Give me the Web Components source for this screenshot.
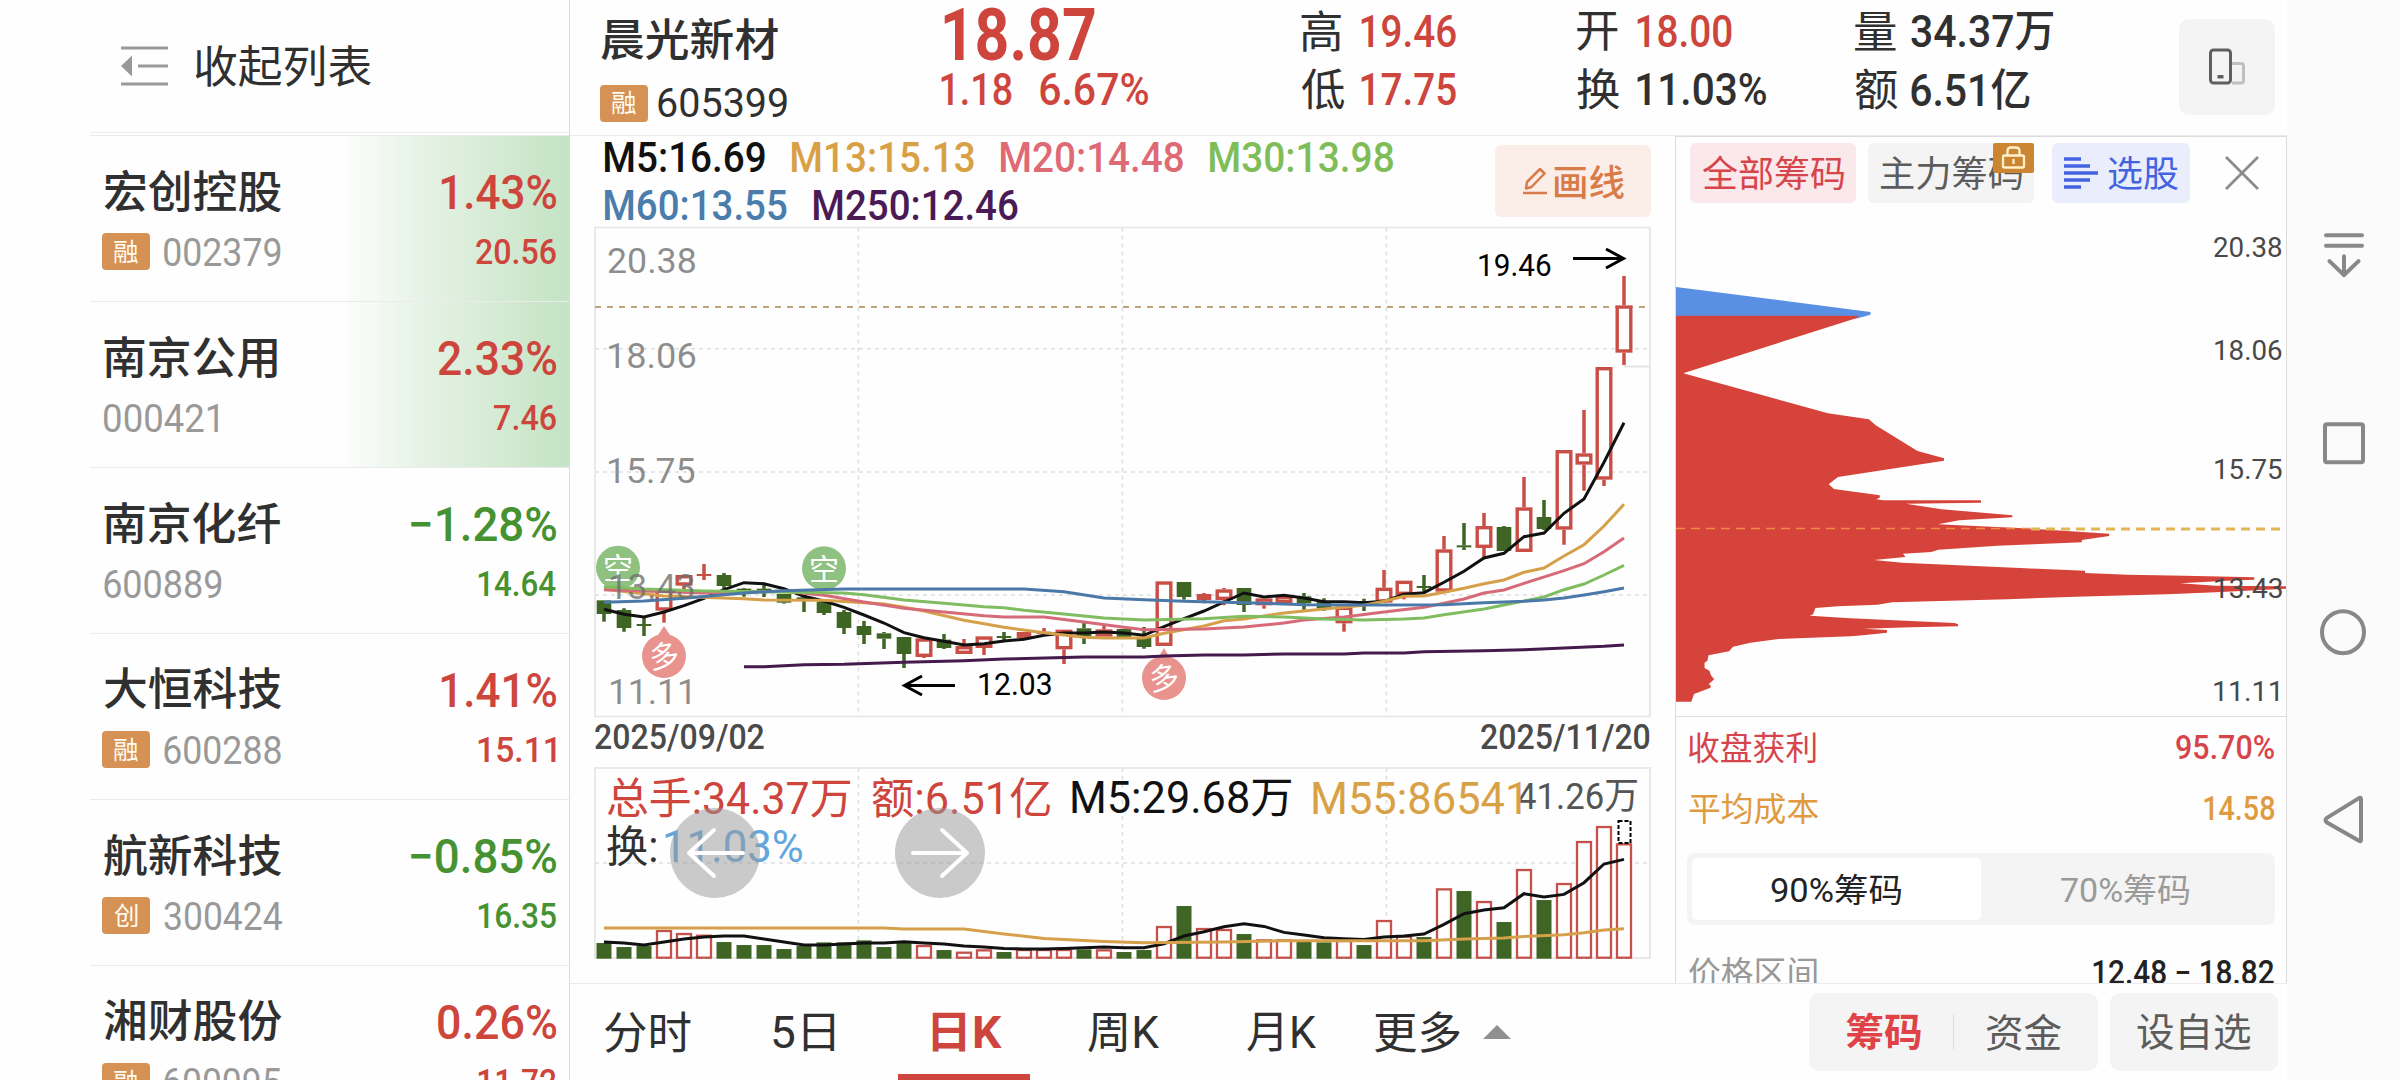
<!DOCTYPE html>
<html lang="zh-CN">
<head>
<meta charset="utf-8">
<title>晨光新材 605399</title>
<style>
    :root {
        --red: #cd453c;
        --green: #469231;
        --ink: #303030;
        --line: #ebebeb;
        --line-dark: #dcdcdc;
        --soft: #f4f4f4;
    }
    body {
        margin: 0;
        width: 2400px;
        height: 1080px;
        overflow: hidden;
        background: #fefefe;
        color: var(--ink);
        font-family: Roboto, "Noto Sans CJK SC", sans-serif;
    }
</style>
</head>
<body>
<app-shell>
    <stock-list slot="list"></stock-list>
    <quote-header slot="header"></quote-header>
    <chart-area slot="charts"></chart-area>
    <chip-panel slot="chips"></chip-panel>
    <period-bar slot="footer"></period-bar>
    <nav-bar slot="nav"></nav-bar>
</app-shell>

<script>
// Page frame: list on the left, quote in the middle, system keys on the right
class AppShell extends HTMLElement {
    constructor() {
        super();
        this.attachShadow({ mode: "open" });
        this.shadowRoot.innerHTML = `
            <style>
                :host {
                    display: grid;
                    grid-template-columns: 480px 1717px 113px;
                    width: 2310px;
                    height: 1080px;
                    padding-left: 90px;
                }
                main {
                    display: grid;
                    grid-template-rows: 136px 847px 97px;
                    height: 1080px;
                }
                .body {
                    display: grid;
                    grid-template-columns: 1105px 612px;
                    min-height: 0;
                }
            </style>
            <slot name="list"></slot>
            <main>
                <slot name="header"></slot>
                <div class="body">
                    <slot name="charts"></slot>
                    <slot name="chips"></slot>
                </div>
                <slot name="footer"></slot>
            </main>
            <slot name="nav"></slot>
        `;
    }
}

// Small orange tag in front of a code
class MarkBadge extends HTMLElement {
    constructor() {
        super();
        this.attachShadow({ mode: "open" });
        this.shadowRoot.innerHTML = `
            <style>
                :host {
                    display: flex;
                    align-items: center;
                    justify-content: center;
                    flex: none;
                    width: 48px;
                    height: 37px;
                    border-radius: 4px;
                    background: #d69255;
                    color: #fffaf0;
                    font-size: 25.5px;
                }
            </style>
            <fit-text><slot></slot></fit-text>
        `;
    }
}

class StockRow extends HTMLElement {
    connectedCallback() {
        const d = this.dataset;
        this.attachShadow({ mode: "open" });
        this.shadowRoot.innerHTML = `
            <style>
                :host {
                    display: block;
                    box-sizing: border-box;
                    height: 166px;
                    padding: 33px 13px 0 14px;
                    border-bottom: 1px solid var(--line);
                }
                :host([flash]) {
                    background: linear-gradient(90deg, rgba(197, 228, 197, 0) 248px, #e3f1e2 345px, #c4e3c4 478px);
                }
                .line {
                    display: flex;
                    align-items: center;
                    height: 44px;
                }
                .line + .line {
                    height: 38px;
                    margin-top: 20px;
                }
                .name { font-size: 44.8px; font-weight: 500; }
                .code { font-size: 38.5px; color: #999; }
                .rate, .price { margin-left: auto; font-weight: 500; color: var(--tone); }
                .rate { font-size: 47.5px; margin-top: 3px; }
                .price { font-size: 35.5px; }
                mark-badge { margin: -1px 14px 0 -2px; }
            </style>
            <div class="line" style="--tone: var(--${d.tone})">
                <fit-text class="name">${d.name}</fit-text>
                <fit-text class="rate" w="${d.rw}">${d.rate}</fit-text>
            </div>
            <div class="line" style="--tone: var(--${d.tone})">
                ${d.mark ? `<mark-badge>${d.mark}</mark-badge>` : ""}
                <fit-text class="code" w="${d.cw}">${d.code}</fit-text>
                <fit-text class="price" w="${d.pw}">${d.price}</fit-text>
            </div>
        `;
    }
}

class StockList extends HTMLElement {
    constructor() {
        super();
        this.attachShadow({ mode: "open" });
        this.shadowRoot.innerHTML = `
            <style>
                :host {
                    display: block;
                    box-sizing: border-box;
                    height: 1080px;
                    overflow: hidden;
                    border-right: 1px solid var(--line-dark);
                }
                .head {
                    display: flex;
                    align-items: center;
                    gap: 26px;
                    height: 132px;
                    padding-left: 31px;
                    border-bottom: 1px solid var(--line);
                    margin-bottom: 2px;
                    font-size: 44.8px;
                }
                .rows { border-top: 1px solid var(--line); }
            </style>
            <div class="head">
                <svg width="48" height="40" viewBox="0 0 48 40">
                    <path d="M0 2H47M17 20H47M0 38H47" stroke="#999" stroke-width="3"/>
                    <path d="M0 20L11 9.500V30.500Z" fill="#999"/>
                </svg>
                <fit-text>收起列表</fit-text>
            </div>
            <div class="rows">
                <stock-row flash data-name="宏创控股" data-mark="融" data-code="002379" data-cw="117" data-rate="1.43%" data-rw="115" data-price="20.56" data-pw="80" data-tone="red"></stock-row>
                <stock-row flash data-name="南京公用" data-code="000421" data-cw="114" data-rate="2.33%" data-rw="118" data-price="7.46" data-pw="62" data-tone="red"></stock-row>
                <stock-row data-name="南京化纤" data-code="600889" data-cw="118" data-rate="−1.28%" data-rw="145" data-price="14.64" data-pw="78" data-tone="green"></stock-row>
                <stock-row data-name="大恒科技" data-mark="融" data-code="600288" data-cw="117" data-rate="1.41%" data-rw="115" data-price="15.11" data-pw="78" data-tone="red"></stock-row>
                <stock-row data-name="航新科技" data-mark="创" data-code="300424" data-cw="118" data-rate="−0.85%" data-rw="145" data-price="16.35" data-pw="78" data-tone="green"></stock-row>
                <stock-row data-name="湘财股份" data-mark="融" data-code="600095" data-cw="117" data-rate="0.26%" data-rw="118" data-price="11.72" data-pw="78" data-tone="red"></stock-row>
            </div>
        `;
    }
}

// Label with its value, for example 高 19.46
class StatItem extends HTMLElement {
    constructor() {
        super();
        this.attachShadow({ mode: "open" });
        this.shadowRoot.innerHTML = `
            <style>
                :host {
                    display: flex;
                    align-items: center;
                    height: 55px;
                    font-size: 44.5px;
                }
                .label { width: var(--label, 60px); }
                .value { font-weight: 500; }
                :host([up]) .value { color: var(--red); }
            </style>
            <div class="label"><fit-text>${this.getAttribute("label")}</fit-text></div>
            <fit-text class="value" w="${this.getAttribute("w")}"><slot></slot></fit-text>
        `;
    }
}

class QuoteHeader extends HTMLElement {
    constructor() {
        super();
        this.attachShadow({ mode: "open" });
        this.shadowRoot.innerHTML = `
            <style>
                :host {
                    display: grid;
                    grid-template-columns: 341px 359px 276px 278px 324px 98px;
                    box-sizing: border-box;
                    height: 136px;
                    padding-left: 31px;
                    border-bottom: 1px solid var(--line);
                }
                .line { display: flex; align-items: center; }
                .name { height: 78px; font-size: 44.8px; font-weight: 500; }
                .code { height: 50px; gap: 10px; font-size: 41.5px; margin-left: -1px; }
                .last { height: 68px; padding-left: 2px; font-size: 71.5px; font-weight: 700; }
                .diff { height: 43px; gap: 28px; font-size: 44.5px; font-weight: 500; margin-left: -1px; }
                .price { color: var(--red); }
                stat-item:first-child { height: 62px; }
                .wide { --label: 56px; }
                .device {
                    display: flex;
                    align-items: center;
                    justify-content: center;
                    width: 96px;
                    height: 96px;
                    margin-top: 19px;
                    border-radius: 10px;
                    background: var(--soft);
                }
            </style>
            <div>
                <div class="line name"><fit-text>晨光新材</fit-text></div>
                <div class="line code">
                    <mark-badge>融</mark-badge>
                    <fit-text w="129">605399</fit-text>
                </div>
            </div>
            <div class="price">
                <div class="line last"><fit-text w="151">18.87</fit-text></div>
                <div class="line diff">
                    <fit-text w="71">1.18</fit-text>
                    <fit-text w="108">6.67%</fit-text>
                </div>
            </div>
            <div>
                <stat-item label="高" w="95" up>19.46</stat-item>
                <stat-item label="低" w="95" up>17.75</stat-item>
            </div>
            <div>
                <stat-item label="开" w="95" up>18.00</stat-item>
                <stat-item label="换" w="129">11.03%</stat-item>
            </div>
            <div class="wide">
                <stat-item label="量" w="142">34.37万</stat-item>
                <stat-item label="额" w="119">6.51亿</stat-item>
            </div>
            <div class="device">
                <svg width="36" height="38" viewBox="0 0 36 38" fill="none">
                    <path d="M23 15.500H32.500Q34.500 15.500 34.500 18V32.500Q34.500 35 32.500 35H23" stroke="#c0c0c0" stroke-width="3"/>
                    <rect x="1.500" y="2" width="20" height="33" rx="3" stroke="#5f5f5f" stroke-width="3"/>
                    <rect x="8.500" y="27" width="6" height="3.500" fill="#5f5f5f"/>
                </svg>
            </div>
        `;
    }
}

// 52 sessions, one every 20px. Levels are thirds of a pixel, measured from y = 520.
const X0 = 604;
const STEP = 20;
// [kind, body top, body bottom, wick top, wick bottom]; g filled, r hollow, f filled red
const CANDLES = [
    ["g",241,282,241,305],["g",270,324,265,335],["g",312,318,288,348],["r",208,272,208,308],
    ["r",165,197,165,208],["f",162,168,132,180],["g",165,198,159,210],["g",206,214,204,230],
    ["g",206,212,195,231],["g",222,248,222,251],["g",232,243,230,276],["g",245,279,245,285],
    ["g",276,324,270,342],["g",318,345,303,372],["g",340,356,336,387],["g",351,402,351,444],
    ["r",355,411,355,414],["g",359,384,342,387],["r",378,402,357,402],["r",349,384,349,405],
    ["g",348,354,336,360],["f",336,354,336,354],["f",335,342,324,348],["r",329,388,329,432],
    ["g",325,349,309,372],["r",328,350,318,350],["g",327,352,327,352],["g",350,381,321,386],
    ["r",184,378,184,378],["g",186,231,186,239],["f",222,240,219,250],["r",208,240,204,256],
    ["g",204,255,204,276],["r",235,256,235,266],["r",228,250,224,250],["g",229,250,219,269],
    ["g",246,265,235,272],["r",260,310,260,335],["g",243,249,236,273],["r",203,248,150,248],
    ["r",182,225,182,238],["g",198,204,165,215],["r",88,215,48,215],["g",76,82,9,90],
    ["r",18,84,-21,115],["g",21,93,18,93],["r",-38,96,-129,96],["g",-9,27,-60,30],
    ["r",-210,29,-208,74],["r",-200,-166,-330,-88],["r",-459,-121,-457,-102],["r",-644,-502,-732,-465]
];
// [session, level] pairs
const AVERAGES = [
    ["#451a4d", [7,440,8,440,10,434,12,433,15,427,18,422,20,417,24,411,27,411,28,408,30,405,32,405,34,402,37,402,38,399,40,399,41,395,44,392,46,389,48,384,50,379,51,375]],
    ["#111", [0,268,1,283,2,291,3,276,4,257,5,235,6,209,7,188,8,191,9,206,10,229,11,243,12,262,13,285,14,309,15,338,16,353,17,364,18,375,19,371,20,363,21,358,22,346,23,339,24,339,25,336,26,339,27,346,28,320,29,296,30,273,31,246,32,219,33,231,34,226,35,234,36,245,37,245,38,248,39,244,40,223,41,218,42,187,43,154,44,114,45,100,46,50,47,39,48,-20,49,-63,50,-173,51,-292]],
    ["#d6a04a", [0,208,3,228,7,236,8,240,11,241,14,252,15,262,16,273,18,301,20,322,22,338,24,352,25,354,27,354,28,340,30,318,31,302,32,297,34,279,36,267,38,256,39,244,40,229,41,228,42,217,43,205,44,191,45,180,46,157,47,144,48,108,49,74,50,18,51,-47]],
    ["#d76a78", [0,209,2,213,5,219,9,214,11,226,13,246,15,265,17,276,19,287,20,291,22,291,24,306,26,322,27,329,30,327,32,321,34,309,35,300,37,291,39,276,41,262,42,250,43,237,44,219,45,210,46,190,48,152,49,131,50,95,51,54]],
    ["#80bd60", [0,200,2,207,5,213,12,219,13,224,15,240,17,250,19,260,20,263,21,271,23,282,25,294,27,300,30,296,32,289,34,291,36,297,38,300,40,297,41,294,42,284,44,267,46,243,47,231,48,209,49,192,50,165,51,136]],
    ["#4a78a8", [0,247,2,243,4,235,7,219,9,212,12,207,21,207,23,215,25,234,27,239,29,244,31,247,33,250,35,254,39,255,42,254,44,248,46,244,47,240,48,234,49,225,50,215,51,204]]
];
// Volume bar heights and their averages, thirds of a pixel above the base line
const VOLUMES = "g47 g35 g38 r86 r77 r72 g50 g41 g41 g29 g38 g49 g49 g55 g35 g48 r41 g26 r21 r28 g20 r29 r29 r29 g28 r28 g20 g26 r98 g158 r92 r89 g74 r58 r58 g53 g49 r56 g41 r116 r69 g65 r211 g203 r173 g110 r269 g176 r227 r353 r398 r346".split(" ");
const VOLUME_AVERAGES = [
    ["#111", [0,50,1,47,2,41,3,50,4,59,5,65,6,68,7,68,8,59,9,50,10,41,11,41,12,44,13,47,14,47,15,51,16,47,17,44,18,38,19,35,20,31,21,29,22,29,23,31,24,33,25,35,26,33,27,33,28,45,29,68,30,81,31,96,32,105,33,97,34,79,35,71,36,63,37,60,38,58,39,65,40,68,41,74,42,103,43,135,44,146,45,153,46,195,47,185,48,193,49,228,50,284,51,298]],
    ["#d6a04a", [0,92,14,92,15,89,18,89,20,74,22,61,25,52,27,48,31,50,34,54,41,54,43,59,45,62,46,67,48,72,49,78,50,86,51,90]]
];

const sessionX = (i) => X0 + i * STEP;

function toLine(color, pairs, toY) {
    const points = [];
    for (let i = 0; i < pairs.length; i += 2) {
        points.push(sessionX(pairs[i]) + "," + toY(pairs[i + 1]).toFixed(1));
    }
    return `<polyline points="${points.join(" ")}" fill="none" stroke="${color}" stroke-width="3"/>`;
}

function gridLines(top, bottom, rows) {
    const columns = [858.5, 1122.5, 1386.5].map((x) => `<path d="M${x} ${top}V${bottom}"/>`).join("");
    const lines = rows.map((y) => `<path d="M595 ${y}H1650"/>`).join("");
    return `
        <g fill="none" stroke="#dedede" stroke-width="1.500" stroke-dasharray="4 4">${columns}${lines}</g>
        <path d="M595 ${top}H1650V${bottom - 1}H595Z" fill="none" stroke="#e9e9e9" stroke-width="2"/>
    `;
}

class KlineChart extends HTMLElement {
    constructor() {
        super();
        const y = (v) => 520 + v / 3;
        const candles = CANDLES.map(([kind, top, bottom, high, low], i) => {
            const x = sessionX(i);
            const color = kind === "g" ? "#3e6524" : "#c94e46";
            const wick = `<path d="M${x} ${y(high)}V${y(top)}M${x} ${y(bottom)}V${y(low)}" stroke="${color}" stroke-width="3.500"/>`;
            const height = Math.max((bottom - top) / 3, 2);
            if (kind === "r") {
                return wick + `<rect x="${x - 6.8}" y="${y(top) + 1.7}" width="13.600" height="${Math.max(height - 3.4, 1)}" fill="#fefefe" stroke="${color}" stroke-width="3.400"/>`;
            }
            return wick + `<rect x="${x - 7.3}" y="${y(top)}" width="14.600" height="${height}" fill="${color}"/>`;
        }).join("");
        const averages = AVERAGES.map(([color, pairs]) => toLine(color, pairs, y)).join("");

        this.attachShadow({ mode: "open" });
        this.shadowRoot.innerHTML = `
            <style>
                :host { display: block; position: relative; height: 490px; }
                svg { display: block; overflow: visible; }
                svg text { font-size: 30px; fill: #fff; text-anchor: middle; }
                fit-text { position: absolute; transform: translateY(-50%); }
                .axis { left: 38px; font-size: 35px; color: rgba(110, 110, 110, .78); }
                .peak { font-size: 31.5px; color: #000; }
            </style>
            <svg width="1105" height="490" viewBox="570 227 1105 490">
                ${gridLines(227.5, 717.5, [348.7, 472, 595])}
                <path d="M595 307H1651" stroke="#bba67c" stroke-width="2" stroke-dasharray="6 6"/>
                <path d="M1624 366.500H1651" stroke="#e4e4e4" stroke-width="2"/>
                ${candles}
                <circle cx="618" cy="567.700" r="22" fill="#8fc180"/>
                <text x="618" y="579">空</text>
                <circle cx="824" cy="568.300" r="22" fill="#8fc180"/>
                <text x="824" y="580">空</text>
                <path d="M664 626L670 635H658Z" fill="#e8938e"/>
                <circle cx="664" cy="656" r="22" fill="#e8938e"/>
                <text x="664" y="667" transform="rotate(-8 664 656)">多</text>
                <path d="M1164 648L1170 658H1158Z" fill="#e8938e"/>
                <circle cx="1164" cy="678" r="22" fill="#e8938e"/>
                <text x="1164" y="689" transform="rotate(-8 1164 678)">多</text>
                ${averages}
                <g fill="none" stroke="#000" stroke-width="3">
                    <path d="M955 685.500H905M922 676L904.500 685.500L922 695"/>
                    <path d="M1573 258.500H1623M1606 249L1623.500 258.500L1606 268"/>
                </g>
            </svg>
            <fit-text class="axis" w="87" style="top: 33px">20.38</fit-text>
            <fit-text class="axis" w="87" style="top: 128px">18.06</fit-text>
            <fit-text class="axis" w="87" style="top: 243px">15.75</fit-text>
            <fit-text class="axis" w="84" style="top: 359px; left: 40px">13.43</fit-text>
            <fit-text class="axis" w="80" style="top: 464px; left: 40px">11.11</fit-text>
            <fit-text class="peak" w="72" style="top: 457px; left: 409px">12.03</fit-text>
            <fit-text class="peak" w="72" style="top: 38px; left: 909px">19.46</fit-text>
        `;
    }
}

class VolumeChart extends HTMLElement {
    constructor() {
        super();
        const base = 958.7;
        const bars = VOLUMES.map((item, i) => {
            const x = sessionX(i);
            const height = Number(item.slice(1)) / 3;
            if (item[0] === "r") {
                return `<rect x="${x - 7}" y="${base - height + 1}" width="14" height="${height - 2}" fill="#fefefe" stroke="#c4524a" stroke-width="2.300"/>`;
            }
            return `<rect x="${x - 7.5}" y="${base - height}" width="15" height="${height}" fill="#3e6524"/>`;
        }).join("");
        const averages = VOLUME_AVERAGES.map(([color, pairs]) => toLine(color, pairs, (v) => base - v / 3)).join("");

        this.attachShadow({ mode: "open" });
        this.shadowRoot.innerHTML = `
            <style>
                :host { display: block; position: relative; height: 191px; }
                svg { display: block; overflow: visible; }
                .legend {
                    position: absolute;
                    top: 7px;
                    left: 37px;
                    font-size: 43.5px;
                    color: var(--red);
                }
                .line { display: flex; align-items: center; height: 46px; gap: 22px; }
                .line + .line { height: 49px; gap: 9px; }
                .max { position: absolute; top: 9px; left: 947px; font-size: 37px; color: #555; }
                .keys { position: absolute; top: 0; left: 0; }
            </style>
            <svg width="1105" height="191" viewBox="570 768 1105 191">
                ${gridLines(768, 959, [863])}
                ${bars}
                <rect x="1618.500" y="821" width="12" height="22" fill="none" stroke="#000" stroke-width="2" stroke-dasharray="4 2"/>
                ${averages}
            </svg>
            <fit-text class="max" w="120">41.26万</fit-text>
            <div class="legend">
                <div class="line">
                    <fit-text w="243">总手:34.37万</fit-text>
                    <fit-text w="178">额:6.51亿</fit-text>
                    <fit-text w="219" style="color: #111">M5:29.68万</fit-text>
                    <fit-text w="208" style="color: #d9a145">M55:86541</fit-text>
                </div>
                <div class="line">
                    <fit-text w="49" style="color: #303030">换:</fit-text>
                    <fit-text w="137" style="color: #62a6dd">11.03%</fit-text>
                </div>
            </div>
            <svg class="keys" width="1105" height="191" viewBox="570 768 1105 191">
                <g fill="#9a9a9a" fill-opacity=".52">
                    <circle cx="715" cy="853" r="45"/>
                    <circle cx="940" cy="853" r="45"/>
                </g>
                <g fill="none" stroke="#fff" stroke-width="4" stroke-linecap="round" stroke-linejoin="round">
                    <path d="M743 853H689M714 830L689 853L714 876"/>
                    <path d="M913 853H967M942 830L967 853L942 876"/>
                </g>
            </svg>
        `;
    }
}

class ChartArea extends HTMLElement {
    constructor() {
        super();
        this.attachShadow({ mode: "open" });
        this.shadowRoot.innerHTML = `
            <style>
                :host { display: block; height: 847px; }
                .top {
                    display: flex;
                    justify-content: space-between;
                    height: 91px;
                    padding: 0 24px 0 35px;
                    font-size: 42px;
                    font-weight: 500;
                }
                .line { display: flex; align-items: center; gap: 27px; height: 42px; }
                .line + .line { height: 44px; margin-top: 5px; }
                .draw {
                    display: flex;
                    align-items: center;
                    justify-content: center;
                    gap: 7px;
                    width: 156px;
                    height: 72px;
                    margin-top: 9px;
                    border-radius: 6px;
                    background: #fbeee8;
                    color: #d87b48;
                    font-size: 36px;
                }
                .dates {
                    display: flex;
                    align-items: center;
                    justify-content: space-between;
                    height: 41px;
                    padding: 0 25px 10px;
                    font-size: 35px;
                    font-weight: 500;
                    color: #4a4a4a;
                }
            </style>
            <div class="top">
                <div>
                    <div class="line">
                        <fit-text w="160" style="color: #111">M5:16.69</fit-text>
                        <fit-text w="182" style="color: #d9a145">M13:15.13</fit-text>
                        <fit-text w="182" style="color: #de6a76">M20:14.48</fit-text>
                        <fit-text w="183" style="color: #7fbd58">M30:13.98</fit-text>
                    </div>
                    <div class="line">
                        <fit-text w="182" style="color: #4a7cac">M60:13.55</fit-text>
                        <fit-text w="204" style="color: #4a1a55">M250:12.46</fit-text>
                    </div>
                </div>
                <div class="draw">
                    <svg width="24" height="28" viewBox="0 0 24 28" fill="none" stroke="#d87b48" stroke-width="2.500">
                        <path d="M0 26H24M3 21.500L4 15L17 2L21.500 6.500L8.500 20Z" stroke-linejoin="round"/>
                    </svg>
                    <fit-text w="70">画线</fit-text>
                </div>
            </div>
            <kline-chart></kline-chart>
            <div class="dates">
                <fit-text w="169">2025/09/02</fit-text>
                <fit-text w="169">2025/11/20</fit-text>
            </div>
            <volume-chart></volume-chart>
        `;
    }
}

class ChipPanel extends HTMLElement {
    constructor() {
        super();
        this.attachShadow({ mode: "open" });
        this.shadowRoot.innerHTML = `
            <style>
                :host {
                    display: block;
                    box-sizing: border-box;
                    height: 847px;
                    overflow: hidden;
                    border: 1px solid var(--line-dark);
                    border-bottom: none;
                }
                .tabs {
                    display: flex;
                    align-items: center;
                    height: 60px;
                    padding: 6px 0 0 14px;
                    font-size: 36px;
                }
                .tab {
                    position: relative;
                    display: flex;
                    align-items: center;
                    justify-content: center;
                    width: 166px;
                    height: 60px;
                    margin-right: 12px;
                    border-radius: 6px;
                    background: var(--soft);
                    color: #5c5c5c;
                }
                .tab.on { background: #fae8ea; color: #d6454c; }
                .tab.pick { width: 138px; gap: 10px; margin: 0 35px 0 6px; background: #eaeefc; color: #4463e0; }
                .lock { position: absolute; top: 0; right: 0; }
                .chart { position: relative; height: 512px; border-bottom: 1px solid var(--line-dark); margin-top: 1px; }
                .chart svg { display: block; }
                .chart fit-text {
                    position: absolute;
                    right: 4px;
                    transform: translateY(-50%);
                    font-size: 27.7px;
                    color: #484848;
                }
                .row {
                    display: flex;
                    align-items: center;
                    justify-content: space-between;
                    height: 61px;
                    padding: 0 12px 0 13px;
                    font-size: 32.8px;
                }
                .row fit-text + fit-text { font-weight: 500; }
                .switch {
                    display: flex;
                    box-sizing: border-box;
                    width: 588px;
                    height: 72px;
                    margin: 14px 0 0 11px;
                    padding: 5px;
                    border-radius: 8px;
                    background: var(--soft);
                    font-size: 33px;
                }
                .switch div {
                    flex: 1;
                    display: flex;
                    align-items: center;
                    justify-content: center;
                    border-radius: 5px;
                    color: #9a9a9a;
                }
                .switch .on { background: #fff; color: #222; }
            </style>
            <div class="tabs">
                <div class="tab on"><fit-text w="142">全部筹码</fit-text></div>
                <div class="tab">
                    <fit-text w="141">主力筹码</fit-text>
                    <svg class="lock" width="41" height="30" viewBox="0 0 41 30" fill="none" stroke="#fff0cc" stroke-width="2.300">
                        <rect width="41" height="30" rx="2" fill="#cc8530" stroke="none"/>
                        <rect x="10" y="12.500" width="21" height="12" rx="1.500"/>
                        <path d="M14.500 12V8Q14.500 4.500 18 4.500H23Q26.500 4.500 26.500 8V12M20.500 16V21"/>
                    </svg>
                </div>
                <div class="tab pick">
                    <svg width="34" height="33" viewBox="0 0 34 33" stroke="#4463e0" stroke-width="3.500">
                        <path d="M0 2H17M0 9H26M0 16H34M0 23H26M0 30H17"/>
                    </svg>
                    <fit-text>选股</fit-text>
                </div>
                <svg width="34" height="34" viewBox="0 0 34 34" stroke="#8c8c8c" stroke-width="2.800">
                    <path d="M1 1L33 33M33 1L1 33"/>
                </svg>
            </div>
            <div class="chart">
                <svg width="610" height="512" viewBox="1676 204 610 512">
                    <!-- distribution outline, plotted on a 1520 x 1500 grid -->
                    <g transform="translate(1670 220) scale(.4018 .33333)">
                        <path fill="#5a90e4" d="M15 201L499 276V284L467 295L400 300H15Z"/>
                        <path fill="#d6433a" d="M15 287H467V293L33 460L393 580L495 598L512 616L616 693L682 715V722L418 771L395 793L408 807L522 826V833L513 838L530 841H774V848L587 851L676 868L852 886V892L720 901L667 913L880 925L1093 941V948L1025 960V967L905 973L815 977L668 989L650 996L580 1001L586 1011L508 1020L578 1028L885 1045L1033 1052V1059L1140 1064L1280 1067L1454 1072V1079L1385 1082L1270 1090L1358 1097L1533 1099V1106L1358 1117L1237 1123L1008 1130L840 1138L553 1147L516 1154L418 1159L362 1164L356 1183L348 1187L450 1195L708 1209L717 1213V1219L600 1222L483 1226L540 1230V1238L480 1246L450 1249L270 1257L200 1268L157 1280L147 1294L96 1306L93 1322L86 1328V1344L98 1352L102 1366L110 1378L96 1393L101 1396V1403L60 1422L53 1445H15Z"/>
                    </g>
                    <path d="M1676 528.500H2030" stroke="#f08a48" stroke-width="1.500" stroke-dasharray="9 6"/>
                    <path d="M2031 529H2286" stroke="#e3b655" stroke-width="3" stroke-dasharray="9 6"/>
                </svg>
                <fit-text w="68" style="top: 43px">20.38</fit-text>
                <fit-text w="67" style="top: 146px">18.06</fit-text>
                <fit-text w="67" style="top: 265px">15.75</fit-text>
                <fit-text w="67" style="top: 384px">13.43</fit-text>
                <fit-text w="64" style="top: 487px; right: 8px">11.11</fit-text>
            </div>
            <div class="row" style="color: #d6454c">
                <fit-text>收盘获利</fit-text>
                <fit-text w="98">95.70%</fit-text>
            </div>
            <div class="row" style="color: #e09a40">
                <fit-text>平均成本</fit-text>
                <fit-text w="70">14.58</fit-text>
            </div>
            <div class="switch">
                <div class="on"><fit-text w="131">90%筹码</fit-text></div>
                <div><fit-text w="129">70%筹码</fit-text></div>
            </div>
            <div class="row" style="height: 94px; color: #999">
                <fit-text>价格区间</fit-text>
                <fit-text w="181" style="color: #222">12.48 − 18.82</fit-text>
            </div>
        `;
    }
}

class PeriodBar extends HTMLElement {
    constructor() {
        super();
        this.attachShadow({ mode: "open" });
        this.shadowRoot.innerHTML = `
            <style>
                :host {
                    display: flex;
                    align-items: center;
                    box-sizing: border-box;
                    height: 97px;
                    padding: 0 9px 0 34px;
                    border-top: 1px solid var(--line);
                    font-size: 44.5px;
                }
                .periods {
                    display: grid;
                    grid-template-columns: 169px 159px 156px 159px 128px 140px;
                    height: 96px;
                }
                .periods div { position: relative; display: flex; align-items: center; gap: 23px; }
                .periods .on { color: var(--red); font-weight: 700; }
                .on::after {
                    content: "";
                    position: absolute;
                    left: -34px;
                    bottom: 0;
                    width: 132px;
                    height: 6px;
                    background: var(--red);
                }
                .group, .add {
                    display: flex;
                    align-items: center;
                    justify-content: center;
                    height: 78px;
                    border-radius: 10px;
                    background: var(--soft);
                    color: #5c5c5c;
                    font-size: 38.6px;
                }
                .group { gap: 32px; width: 289px; margin: 0 12px 0 auto; }
                .group b { color: #df4247; }
                .group i { width: 1px; height: 36px; background: #dedede; }
                .add { width: 168px; }
            </style>
            <div class="periods">
                <div><fit-text>分时</fit-text></div>
                <div><fit-text w="62">5日</fit-text></div>
                <div class="on"><fit-text w="70">日K</fit-text></div>
                <div><fit-text w="71">周K</fit-text></div>
                <div><fit-text w="69">月K</fit-text></div>
                <div>
                    <fit-text>更多</fit-text>
                    <svg width="28" height="14" viewBox="0 0 28 14"><path d="M0 14L14 0L28 14Z" fill="#909090"/></svg>
                </div>
            </div>
            <div class="group">
                <b><fit-text>筹码</fit-text></b>
                <i></i>
                <fit-text>资金</fit-text>
            </div>
            <div class="add"><fit-text>设自选</fit-text></div>
        `;
    }
}

class NavBar extends HTMLElement {
    constructor() {
        super();
        this.attachShadow({ mode: "open" });
        this.shadowRoot.innerHTML = `
            <style>
                :host {
                    display: flex;
                    flex-direction: column;
                    align-items: center;
                    box-sizing: border-box;
                    height: 1080px;
                    padding-top: 161px;
                    background: #fbfbfb;
                }
                svg {
                    width: 48px;
                    height: 188.300px;
                    fill: none;
                    stroke: #888;
                    stroke-width: 4;
                    stroke-linecap: round;
                    stroke-linejoin: round;
                }
            </style>
            <svg viewBox="0 0 48 48"><path d="M6 4H42M6 14.500H42M24 25V44M9.500 30L24 44L38.500 30"/></svg>
            <svg viewBox="0 0 48 48"><rect x="5" y="5" width="38" height="38" rx="2"/></svg>
            <svg viewBox="0 0 48 48"><circle cx="23" cy="24" r="21"/></svg>
            <svg viewBox="0 0 48 48"><path d="M41 3V44Q41 46 39 44.500L6.500 26Q4.500 24 6.500 22L39 2Q41 1 41 3Z"/></svg>
        `;
    }
}

// Text set to an exact ink width, centred on its ink in height.
// Gives Roboto the narrow look of the quote digits.
const pen = document.createElement("canvas").getContext("2d");

class FitText extends HTMLElement {
    constructor() {
        super();
        this.attachShadow({ mode: "open" });
        this.shadowRoot.innerHTML = `
            <style>
                :host { display: block; flex: none; height: 1em; line-height: 1; white-space: nowrap; }
                span { display: inline-block; transform-origin: 0 0; }
            </style>
            <span><slot></slot></span>
        `;
    }

    connectedCallback() {
        const span = this.shadowRoot.querySelector("span");
        const slot = this.querySelector("slot");
        const text = (slot ? slot.assignedNodes().map((n) => n.textContent).join("") : this.textContent).trim();
        const css = getComputedStyle(this);
        const size = parseFloat(css.fontSize);
        pen.font = `${css.fontWeight} ${css.fontSize} ${css.fontFamily}`;
        const m = pen.measureText(text);
        const ink = m.actualBoundingBoxRight + m.actualBoundingBoxLeft;
        const width = Number(this.getAttribute("w")) || ink;
        const scale = width / ink;
        const baseline = size / 2 + (m.fontBoundingBoxAscent - m.fontBoundingBoxDescent) / 2;
        const middle = baseline - (m.actualBoundingBoxAscent - m.actualBoundingBoxDescent) / 2;
        this.style.width = width + "px";
        span.style.transform = `translate(${m.actualBoundingBoxLeft * scale}px, ${size / 2 - middle}px) scaleX(${scale})`;
    }
}

customElements.define("app-shell", AppShell);
customElements.define("mark-badge", MarkBadge);
customElements.define("stock-row", StockRow);
customElements.define("stock-list", StockList);
customElements.define("stat-item", StatItem);
customElements.define("quote-header", QuoteHeader);
customElements.define("kline-chart", KlineChart);
customElements.define("volume-chart", VolumeChart);
customElements.define("chart-area", ChartArea);
customElements.define("chip-panel", ChipPanel);
customElements.define("period-bar", PeriodBar);
customElements.define("nav-bar", NavBar);
// measured last, once everything around it has its styles
customElements.define("fit-text", FitText);
</script>
</body>
</html>
